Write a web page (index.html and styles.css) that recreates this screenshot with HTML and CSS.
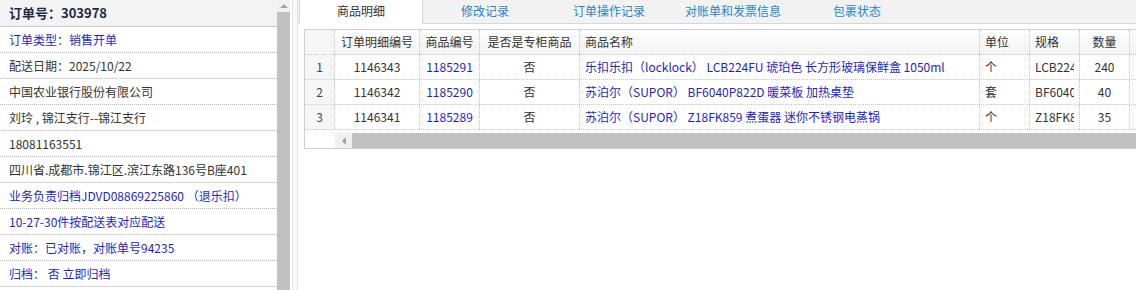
FILE: index.html
```html
<!DOCTYPE html>
<html lang="zh-CN">
<head>
<meta charset="utf-8">
<link rel="stylesheet" href="styles.css">
</head>
<body>
<div class="page">
  <aside class="side">
    <div class="list">
      <div class="head">订单号：303978</div>
      <div class="row blue">订单类型：销售开单</div>
      <div class="row">配送日期：2025/10/22</div>
      <div class="row">中国农业银行股份有限公司</div>
      <div class="row">刘玲 , 锦江支行--锦江支行</div>
      <div class="row">18081163551</div>
      <div class="row">四川省.成都市.锦江区.滨江东路136号B座401</div>
      <div class="row blue">业务负责归档JDVD08869225860 （退乐扣）</div>
      <div class="row blue">10-27-30件按配送表对应配送</div>
      <div class="row blue">对账：已对账，对账单号94235</div>
      <div class="row blue">归档： 否 立即归档</div>
    </div>
    <div class="vscroll">
      <div class="vbtn"><span class="up"></span></div>
      <div class="vthumb"></div>
    </div>
  </aside>
  <div class="gutter"></div>
  <main class="main">
    <nav class="tabs">
      <div class="tab active">商品明细</div>
      <div class="tab">修改记录</div>
      <div class="tab">订单操作记录</div>
      <div class="tab">对账单和发票信息</div>
      <div class="tab">包裹状态</div>
    </nav>
    <div class="content">
      <div class="grid">
        <div class="gr ghead">
          <div class="c rn"></div>
          <div class="c w85 ctr">订单明细编号</div>
          <div class="c w60 ctr">商品编号</div>
          <div class="c w100 ctr">是否是专柜商品</div>
          <div class="c w400">商品名称</div>
          <div class="c w50">单位</div>
          <div class="c w50">规格</div>
          <div class="c w50 ctr">数量</div>
          <div class="c w60"></div>
        </div>
        <div class="gr">
          <div class="c rn">1</div>
          <div class="c w85 ctr">1146343</div>
          <div class="c w60 ctr blue">1185291</div>
          <div class="c w100 ctr">否</div>
          <div class="c w400 blue">乐扣乐扣（locklock） LCB224FU 琥珀色 长方形玻璃保鲜盒 1050ml</div>
          <div class="c w50">个</div>
          <div class="c w50"><span class="clip">LCB224FU</span></div>
          <div class="c w50 ctr">240</div>
          <div class="c w60"></div>
        </div>
        <div class="gr">
          <div class="c rn">2</div>
          <div class="c w85 ctr">1146342</div>
          <div class="c w60 ctr blue">1185290</div>
          <div class="c w100 ctr">否</div>
          <div class="c w400 blue">苏泊尔（SUPOR） BF6040P822D 暖菜板 加热桌垫</div>
          <div class="c w50">套</div>
          <div class="c w50"><span class="clip">BF6040P822D</span></div>
          <div class="c w50 ctr">40</div>
          <div class="c w60"></div>
        </div>
        <div class="gr">
          <div class="c rn">3</div>
          <div class="c w85 ctr">1146341</div>
          <div class="c w60 ctr blue">1185289</div>
          <div class="c w100 ctr">否</div>
          <div class="c w400 blue">苏泊尔（SUPOR） Z18FK859 煮蛋器 迷你不锈钢电蒸锅</div>
          <div class="c w50">个</div>
          <div class="c w50"><span class="clip">Z18FK859</span></div>
          <div class="c w50 ctr">35</div>
          <div class="c w60"></div>
        </div>
        <div class="hscroll">
          <div class="hblank"></div>
          <div class="hbtn"><span class="left"></span></div>
          <div class="hthumb"></div>
        </div>
      </div>
    </div>
  </main>
</div>
</body>
</html>
```
FILE: styles.css
```css
* { box-sizing: border-box; }
html, body { margin: 0; padding: 0; background: #fff; }
body {
  font-family: "Noto Sans CJK SC", "Liberation Sans", sans-serif;
  font-size: 12px;
  color: #333;
  width: 1136px;
  height: 290px;
  overflow: hidden;
}
.page { display: flex; height: 290px; overflow: hidden; }
.side { display: flex; width: 290px; flex: none; }
.list { width: 277px; flex: none; overflow: hidden; }
.head {
  height: 27px;
  line-height: 25px;
  padding-left: 9px;
  font-size: 13px;
  font-weight: bold;
  color: #1d2a48;
  background: #f3f3f3;
  border-bottom: 1px solid #c9c9c9;
}
.row {
  height: 26px;
  line-height: 25px;
  padding-left: 9px;
  border-bottom: 1px dotted #b8b8b8;
  white-space: nowrap;
  overflow: hidden;
}
.blue { color: #1f1fc0; }
.vscroll { width: 13px; flex: none; display: flex; flex-direction: column; }
.vbtn { height: 12px; background: #f1f1f1; display: flex; justify-content: center; align-items: center; }
.up { width: 0; height: 0; border-left: 4px solid transparent; border-right: 4px solid transparent; border-bottom: 4px solid #a3a3a3; }
.vthumb { flex: 1; background: #c1c1c1; }
.gutter {
  width: 8px; flex: none;
  background: #f8f8f8;
  border-left: 2px solid #fff;
  border-right: 1px solid #e2e2e2;
  box-shadow: inset 1px 0 0 #e4e4e4;
}
.main { flex: 1; overflow: hidden; min-width: 0; }
.tabs {
  display: flex;
  height: 24px;
  background: #f2f2f2;
  border-bottom: 1px solid #d6d6d6;
  padding-left: 1px;
}
.tab {
  width: 124px;
  flex: none;
  text-align: center;
  line-height: 22px;
  color: #2a84c8;
  font-size: 12px;
}
.tab.active {
  background: #fff;
  color: #333;
  height: 24px;
  border-left: 1px solid #d6d6d6;
  border-right: 1px solid #d6d6d6;
}
.content { padding: 5px 0 0 6px; }
.grid {
  width: 900px;
  border: 1px solid #cfcfcf;
  border-right: none;
}
.gr { display: flex; height: 25px; border-bottom: 1px dotted #c4c4c4; }
.ghead { height: 25px; background: linear-gradient(#ffffff, #f2f2f2); border-bottom: 1px dotted #c4c4c4; }
.c {
  flex: none;
  line-height: 24px;
  padding: 0 5px;
  white-space: nowrap;
  overflow: hidden;
  border-right: 1px dotted #c4c4c4;
}
.clip { display: block; width: 39px; overflow: hidden; white-space: nowrap; }
.ctr { text-align: center; }
.rn { width: 30px; text-align: center; background: #f6f6f6; color: #444; }
.w85 { width: 85px; }
.w60 { width: 60px; }
.w100 { width: 100px; }
.w400 { width: 400px; }
.w50 { width: 50px; }
.w50.ctr { padding: 0; }
.hscroll { display: flex; height: 18px; padding-top: 3px; }
.hblank { width: 30px; flex: none; }
.hbtn { width: 17px; flex: none; background: #f0f0f0; display: flex; align-items: center; justify-content: center; }
.left { width: 0; height: 0; border-top: 4px solid transparent; border-bottom: 4px solid transparent; border-right: 4px solid #a3a3a3; }
.hthumb { flex: 1; background: #c1c1c1; }
```
